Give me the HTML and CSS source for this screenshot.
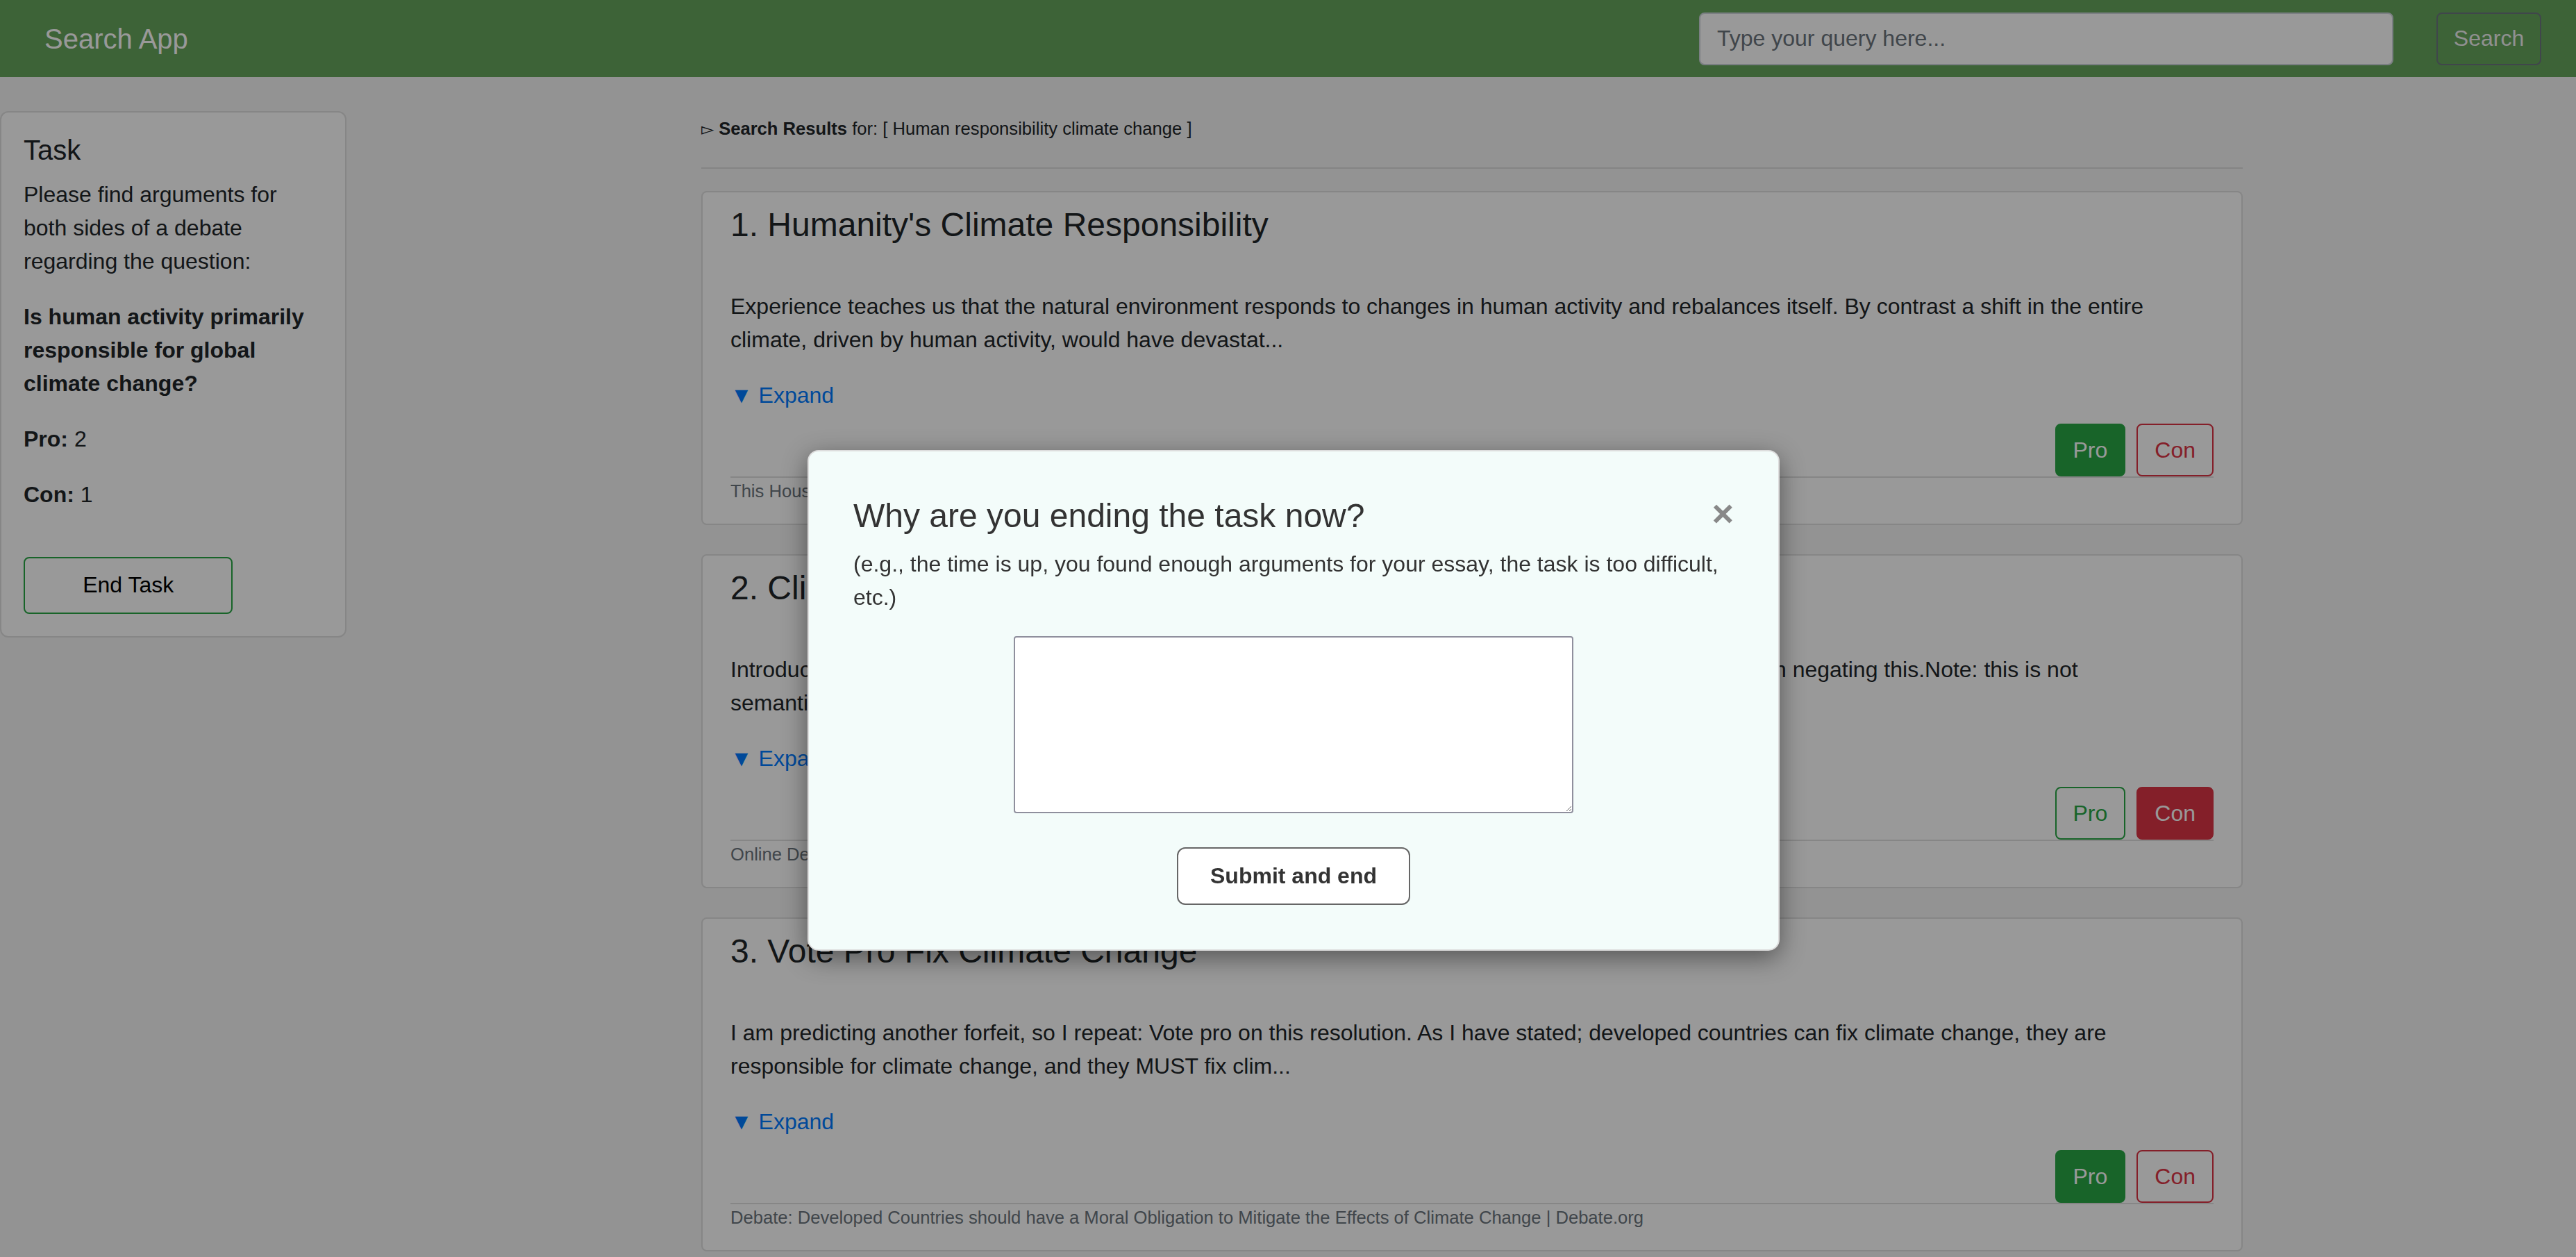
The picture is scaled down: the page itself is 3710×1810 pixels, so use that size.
FILE: index.html
```html
<!DOCTYPE html>
<html lang="en">
<head>
<meta charset="utf-8">
<title>Search App</title>
<link rel="stylesheet" href="styles.css">
</head>
<body>
<nav class="navbar">
  <span class="brand">Search App</span>
  <form class="search-form">
    <input class="search-input" type="text" placeholder="Type your query here...">
    <button class="search-btn" type="button">Search</button>
  </form>
</nav>

<div class="layout">
  <aside class="task-card">
    <h5 class="task-title">Task</h5>
    <p>Please find arguments for both sides of a debate regarding the question:</p>
    <p class="question">Is human activity primarily responsible for global climate change?</p>
    <p><strong>Pro:</strong> 2</p>
    <p><strong>Con:</strong> 1</p>
    <button class="end-btn" type="button">End Task</button>
  </aside>

  <main class="results">
    <div class="results-head"><span class="tri">&#9659;</span> <strong>Search Results</strong> for: [ Human responsibility climate change ]</div>
    <hr class="results-rule">

    <article class="result">
      <h4 class="result-title">1. Humanity's Climate Responsibility</h4>
      <p class="result-text">Experience teaches us that the natural environment responds to changes in human activity and rebalances itself. By contrast a shift in the entire climate, driven by human activity, would have devastat...</p>
      <a class="expand" href="#">&#9660; Expand</a>
      <div class="votes">
        <button class="btn pro-filled" type="button">Pro</button>
        <button class="btn con-outline" type="button">Con</button>
      </div>
      <div class="source">This House believes humans are responsible for climate change | Debate.org</div>
    </article>

    <article class="result">
      <h4 class="result-title">2. Climate Change Is Caused by Humans</h4>
      <p class="result-text">Introduction: I will be arguing that human activity is the major driver of climate change, with the Con position negating this.Note: this is not semantics.The burden of proof is shared equally between us...</p>
      <a class="expand" href="#">&#9660; Expand</a>
      <div class="votes">
        <button class="btn pro-outline" type="button">Pro</button>
        <button class="btn con-filled" type="button">Con</button>
      </div>
      <div class="source">Online Debate: Humans Cause Climate Change | Debate.org</div>
    </article>

    <article class="result">
      <h4 class="result-title">3. Vote Pro Fix Climate Change</h4>
      <p class="result-text">I am predicting another forfeit, so I repeat: Vote pro on this resolution. As I have stated; developed countries can fix climate change, they are responsible for climate change, and they MUST fix clim...</p>
      <a class="expand" href="#">&#9660; Expand</a>
      <div class="votes">
        <button class="btn pro-filled" type="button">Pro</button>
        <button class="btn con-outline" type="button">Con</button>
      </div>
      <div class="source">Debate: Developed Countries should have a Moral Obligation to Mitigate the Effects of Climate Change | Debate.org</div>
    </article>
  </main>
</div>

<div class="backdrop"></div>
<div class="modal" role="dialog">
  <div class="modal-head">
    <h4 class="modal-title">Why are you ending the task now?</h4>
    <button class="close" type="button">&times;</button>
  </div>
  <p class="modal-sub">(e.g., the time is up, you found enough arguments for your essay, the task is too difficult, etc.)</p>
  <textarea class="reason"></textarea>
  <button class="submit-btn" type="button">Submit and end</button>
</div>
</body>
</html>
```

FILE: styles.css
```css
html {
  zoom: 2;
}

body {
  margin: 0;
  font-family: "Liberation Sans", Arial, sans-serif;
  font-size: 16px;
  line-height: 1.5;
  color: #212529;
  background: #f5f5f5;
}

/* ---------- navbar ---------- */
.navbar {
  display: flex;
  align-items: center;
  height: 55.5px;
  box-sizing: border-box;
  padding: 0 25px 0 32px;
  background: #66a65c;
}

.brand {
  color: #ffffff;
  font-size: 20px;
  line-height: 30px;
}

.search-form {
  display: flex;
  align-items: center;
  gap: 31px;
  margin: 0 0 0 auto;
}

.search-input {
  width: 500px;
  height: 38px;
  box-sizing: border-box;
  padding: 6px 12px;
  border: 1px solid #ced4da;
  border-radius: 4px;
  background: #ffffff;
  color: #495057;
  font-family: inherit;
  font-size: 16px;
}

.search-input::placeholder {
  color: #6c757d;
}

.search-btn {
  width: 75.5px;
  height: 38px;
  padding: 0;
  border: 1px solid #6c757d;
  border-radius: 4px;
  background: transparent;
  color: #f0f0f0;
  font-family: inherit;
  font-size: 16px;
}

/* ---------- layout ---------- */
.layout {
  display: flex;
  align-items: flex-start;
  padding-top: 24.5px;
}

.task-card {
  width: 249.5px;
  box-sizing: border-box;
  padding: 15px 16px 16px;
  border: 1px solid rgba(0, 0, 0, 0.125);
  border-radius: 6px;
  background: #ffffff;
}

.task-title {
  margin: 0 0 8px;
  font-size: 20px;
  font-weight: 400;
  line-height: 1.2;
}

.task-card p {
  margin: 0 0 16px;
}

.task-card .question {
  font-weight: 700;
}

.end-btn {
  display: block;
  width: 150.7px;
  height: 41.2px;
  margin-top: 32.8px;
  padding: 0;
  border: 1px solid #28a745;
  border-radius: 4px;
  background: #ffffff;
  color: #000000;
  font-family: inherit;
  font-size: 16px;
}

/* ---------- results ---------- */
.results {
  width: 1110px;
  margin-left: 255.5px;
}

.results-head {
  padding-top: 3px;
  font-size: 12.8px;
  line-height: 19.2px;
}

.tri {
  font-size: 12px;
}

.results-rule {
  height: 0;
  margin: 17.8px 0 16px;
  border: 0;
  border-top: 1px solid rgba(0, 0, 0, 0.1);
}

.result {
  margin-bottom: 21px;
  padding: 9px 20px 13.8px;
  border: 1px solid rgba(0, 0, 0, 0.125);
  border-radius: 4px;
  background: #ffffff;
}

.result-title {
  margin: 0 0 32px;
  font-size: 24px;
  font-weight: 400;
  line-height: 1.2;
}

.result-text {
  margin: 0 0 16px;
}

.expand {
  display: block;
  width: max-content;
  margin-bottom: 8.7px;
  color: #007bff;
  text-decoration: none;
}

.votes {
  display: flex;
  justify-content: flex-end;
  gap: 8px;
  border-bottom: 1px solid rgba(0, 0, 0, 0.12);
}

.btn {
  height: 38px;
  padding: 0 12px;
  border: 1px solid transparent;
  border-radius: 4px;
  font-family: inherit;
  font-size: 16px;
  line-height: 1.5;
}

.pro-filled {
  background: #28a745;
  border-color: #28a745;
  color: #ffffff;
}

.pro-outline {
  background: transparent;
  border-color: #28a745;
  color: #28a745;
}

.con-filled {
  background: #dc3545;
  border-color: #dc3545;
  color: #ffffff;
}

.con-outline {
  background: transparent;
  border-color: #dc3545;
  color: #dc3545;
}

.source {
  font-size: 12.8px;
  line-height: 19.2px;
  color: #6c757d;
}

/* ---------- modal ---------- */
.backdrop {
  position: fixed;
  inset: 0;
  z-index: 10;
  background: rgba(0, 0, 0, 0.4);
}

.modal {
  position: fixed;
  top: 324px;
  left: 581.5px;
  z-index: 11;
  width: 700px;
  box-sizing: border-box;
  padding: 32px;
  border: 1px solid #dddddd;
  border-radius: 8px;
  background: #f3fcfa;
  color: #333333;
  box-shadow: 0 5px 18px rgba(0, 0, 0, 0.45);
}

.modal-head {
  display: flex;
  align-items: center;
  justify-content: space-between;
  margin-bottom: 8px;
}

.modal-title {
  margin: 0;
  font-size: 24px;
  font-weight: 400;
  line-height: 1.2;
}

.close {
  margin-top: -4px;
  padding: 0;
  border: 0;
  background: none;
  color: #888888;
  font-family: inherit;
  font-size: 27px;
  font-weight: 700;
  line-height: 1;
}

.modal-sub {
  margin: 0 0 16px;
}

.reason {
  display: block;
  width: 403px;
  height: 127.5px;
  box-sizing: border-box;
  margin: 0 auto;
  border: 1px solid #8f8f9d;
  border-radius: 2px;
  background: #ffffff;
}

.submit-btn {
  display: block;
  width: 168px;
  height: 41.7px;
  margin: 24.5px auto 0;
  padding: 0;
  border: 1px solid #666666;
  border-radius: 6px;
  background: #ffffff;
  color: #333333;
  font-family: inherit;
  font-size: 16px;
  font-weight: 700;
}
```
